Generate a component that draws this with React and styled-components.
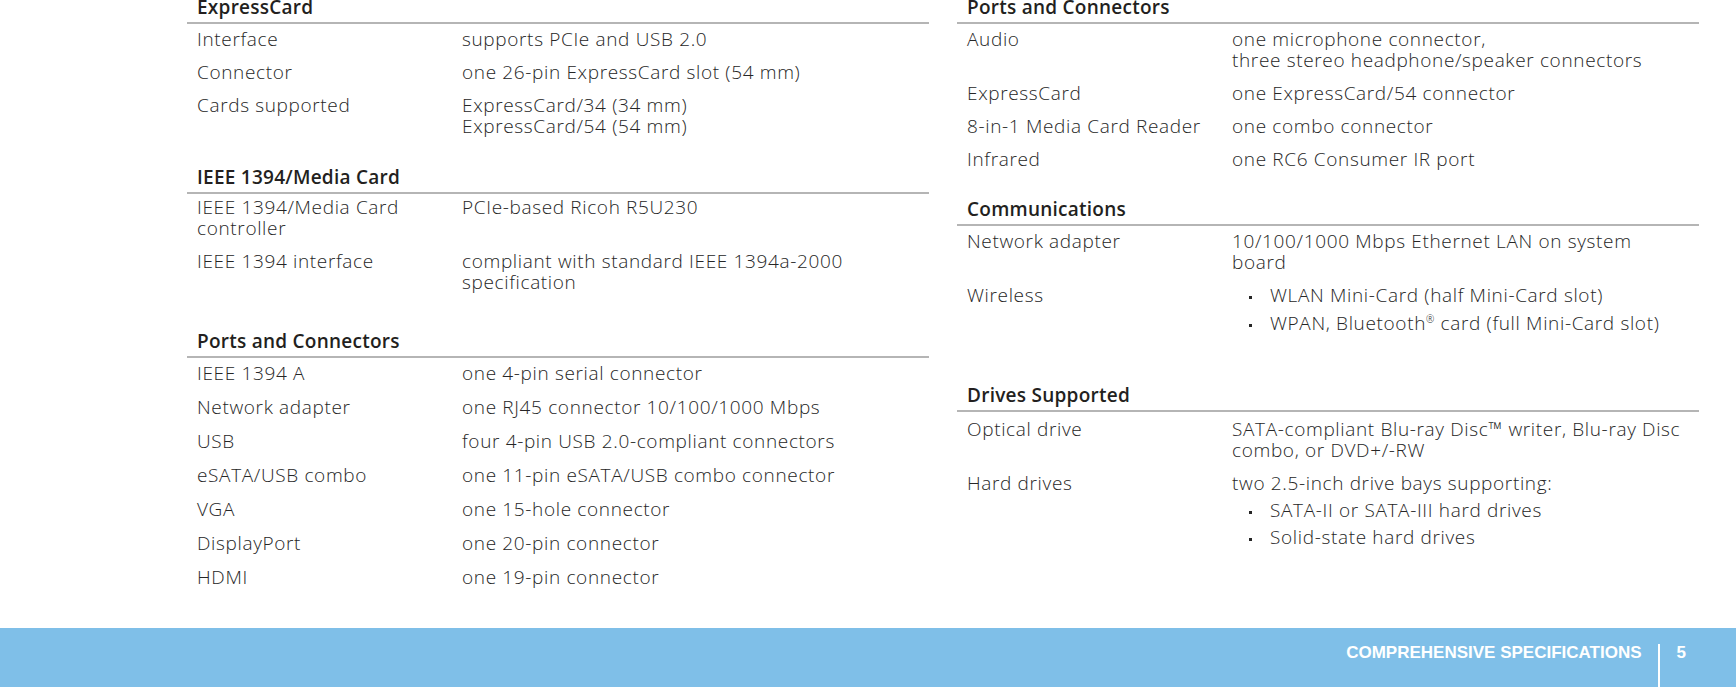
import React from 'react';
import styled, { createGlobalStyle } from 'styled-components';

const GlobalStyle = createGlobalStyle`
  html, body, #root {
    margin: 0;
    height: 100%;
  }
  body {
    background: #ffffff;
    font-family: "Open Sans", "Liberation Sans", sans-serif;
  }
`;

const Page = styled.div`
  height: 100vh;
  display: flex;
  flex-direction: column;
  overflow: hidden;
`;

const Columns = styled.main`
  display: grid;
  grid-template-columns: 742px 742px;
  column-gap: 28px;
  align-items: start;
  padding-left: 187px;
  margin-top: -3px;
`;

const Column = styled.div`
  display: flex;
  flex-direction: column;
`;

const Section = styled.section`
  margin-top: ${(p) => p.$space || 0}px;
`;

const Heading = styled.h2`
  margin: 0;
  padding: 0 0 5px 10px;
  font-size: 19px;
  line-height: 20px;
  font-weight: 600;
  letter-spacing: 0.25px;
  color: #231f20;
  border-bottom: 2px solid #b5b5b5;
`;

const Rows = styled.div`
  display: grid;
  grid-template-columns: 265px 1fr;
  row-gap: ${(p) => p.$gap || 12}px;
  padding: ${(p) => p.$top || 5}px 0 0 10px;
`;

const Label = styled.div`
  font-size: 19px;
  line-height: 21px;
  font-weight: 300;
  letter-spacing: 0.65px;
  color: #262626;
`;

const Value = styled(Label)`
  display: flex;
  flex-direction: column;
  gap: 6px;
`;

const Bullets = styled.ul`
  list-style: none;
  margin: 0;
  padding: 0;
  display: flex;
  flex-direction: column;
  gap: ${(p) => p.$gap || 6}px;
`;

const Item = styled.li`
  position: relative;
  padding-left: 38px;

  &::before {
    content: '';
    position: absolute;
    left: 17px;
    top: 11px;
    width: 3px;
    height: 3px;
    background: #262626;
  }
`;

const Sup = styled.sup`
  font-size: 10px;
  line-height: 0;
`;

const Footer = styled.footer`
  margin-top: auto;
  height: 59px;
  flex-shrink: 0;
  box-sizing: border-box;
  background: #7fbfe8;
  display: flex;
  justify-content: flex-end;
  padding: 17px 50px 0 0;
  font-family: "Liberation Sans", Arial, sans-serif;
  color: #ffffff;
`;

const FooterTitle = styled.span`
  font-size: 17px;
  line-height: 16px;
  font-weight: 700;
`;

const Divider = styled.span`
  width: 2px;
  margin: -1px 17px 0 16px;
  background: #ffffff;
`;

const PageNum = styled.span`
  font-size: 17px;
  line-height: 16px;
  font-weight: 700;
`;

const Spec = ({ label, children }) => (
  <>
    <Label>{label}</Label>
    <Value>{children}</Value>
  </>
);

export default function App() {
  return (
    <>
      <GlobalStyle />
      <Page>
        <Columns>
          <Column>
            <Section>
              <Heading>ExpressCard</Heading>
              <Rows>
                <Spec label="Interface">supports PCIe and USB 2.0</Spec>
                <Spec label="Connector">one 26-pin ExpressCard slot (54 mm)</Spec>
                <Spec label="Cards supported">
                  <span>ExpressCard/34 (34 mm)<br />ExpressCard/54 (54 mm)</span>
                </Spec>
              </Rows>
            </Section>

            <Section $space={30}>
              <Heading>IEEE 1394/Media Card</Heading>
              <Rows $top={3}>
                <Spec label={<>IEEE 1394/Media Card<br />controller</>}>PCIe-based Ricoh R5U230</Spec>
                <Spec label="IEEE 1394 interface">
                  <span>compliant with standard IEEE 1394a-2000<br />specification</span>
                </Spec>
              </Rows>
            </Section>

            <Section $space={38}>
              <Heading>Ports and Connectors</Heading>
              <Rows $gap={13}>
                <Spec label="IEEE 1394 A">one 4-pin serial connector</Spec>
                <Spec label="Network adapter">one RJ45 connector 10/100/1000 Mbps</Spec>
                <Spec label="USB">four 4-pin USB 2.0-compliant connectors</Spec>
                <Spec label="eSATA/USB combo">one 11-pin eSATA/USB combo connector</Spec>
                <Spec label="VGA">one 15-hole connector</Spec>
                <Spec label="DisplayPort">one 20-pin connector</Spec>
                <Spec label="HDMI">one 19-pin connector</Spec>
              </Rows>
            </Section>
          </Column>

          <Column>
            <Section>
              <Heading>Ports and Connectors</Heading>
              <Rows>
                <Spec label="Audio">
                  <span>one microphone connector,<br />three stereo headphone/speaker connectors</span>
                </Spec>
                <Spec label="ExpressCard">one ExpressCard/54 connector</Spec>
                <Spec label="8-in-1 Media Card Reader">one combo connector</Spec>
                <Spec label="Infrared">one RC6 Consumer IR port</Spec>
              </Rows>
            </Section>

            <Section $space={29}>
              <Heading>Communications</Heading>
              <Rows>
                <Spec label="Network adapter">
                  <span>10/100/1000 Mbps Ethernet LAN on system<br />board</span>
                </Spec>
                <Spec label="Wireless">
                  <Bullets $gap={7}>
                    <Item>WLAN Mini-Card (half Mini-Card slot)</Item>
                    <Item>WPAN, Bluetooth<Sup>®</Sup> card (full Mini-Card slot)</Item>
                  </Bullets>
                </Spec>
              </Rows>
            </Section>

            <Section $space={51}>
              <Heading>Drives Supported</Heading>
              <Rows $top={7}>
                <Spec label="Optical drive">
                  <span>SATA-compliant Blu-ray Disc™ writer, Blu-ray Disc<br />combo, or DVD+/-RW</span>
                </Spec>
                <Spec label="Hard drives">
                  <span>two 2.5-inch drive bays supporting:</span>
                  <Bullets>
                    <Item>SATA-II or SATA-III hard drives</Item>
                    <Item>Solid-state hard drives</Item>
                  </Bullets>
                </Spec>
              </Rows>
            </Section>
          </Column>
        </Columns>

        <Footer>
          <FooterTitle>COMPREHENSIVE SPECIFICATIONS</FooterTitle>
          <Divider />
          <PageNum>5</PageNum>
        </Footer>
      </Page>
    </>
  );
}
